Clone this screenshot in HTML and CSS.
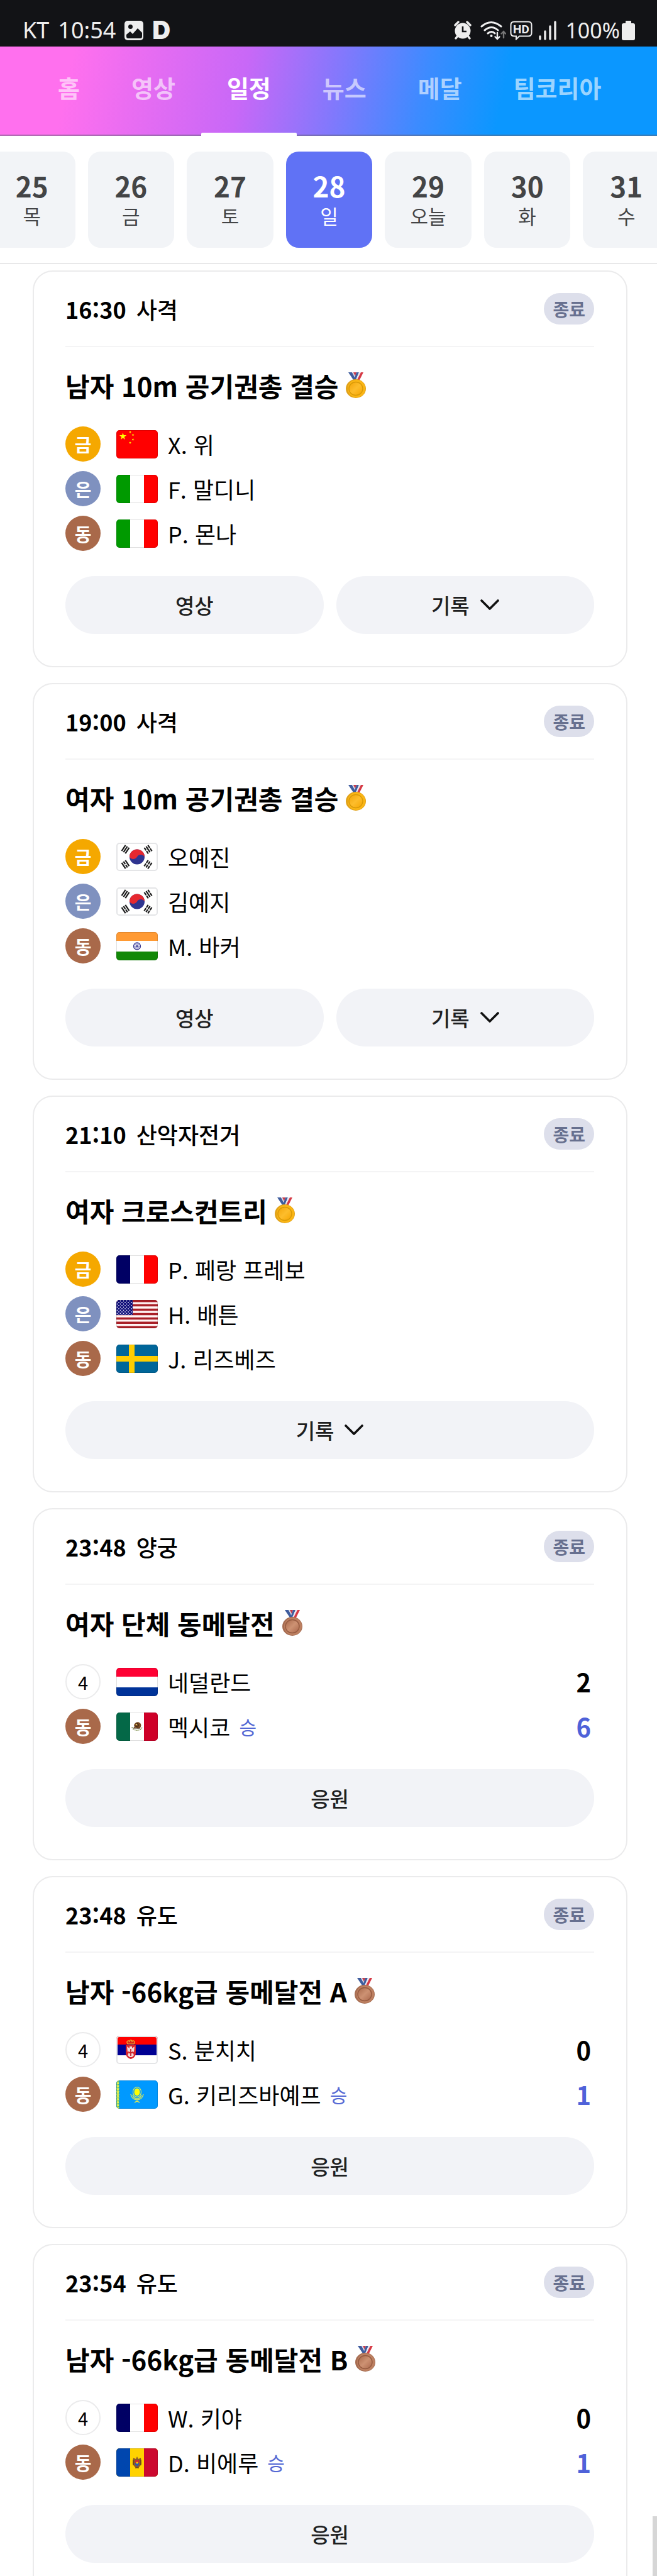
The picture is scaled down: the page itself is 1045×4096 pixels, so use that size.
FILE: index.html
```html
<!DOCTYPE html>
<html lang="ko">
<head>
<meta charset="utf-8">
<meta name="viewport" content="width=device-width, initial-scale=1">
<title>일정</title>
<link rel="stylesheet" href="styles.css">
</head>
<body>
<svg class="sprite" aria-hidden="true">
  <defs>
    <linearGradient id="gold" x1="0" y1="0" x2="1" y2="1">
      <stop offset="0" stop-color="#f3a407"/><stop offset=".5" stop-color="#fdbd2c"/><stop offset="1" stop-color="#f6a500"/>
    </linearGradient>
    <linearGradient id="bronze" x1="0" y1="0" x2="1" y2="1">
      <stop offset="0" stop-color="#a8684a"/><stop offset=".5" stop-color="#cd9273"/><stop offset="1" stop-color="#a9664a"/>
    </linearGradient>
    <path id="star" d="M0-6 1.4-1.9H5.7L2.2.7 3.5 4.9 0 2.3-3.5 4.9-2.2.7-5.7-1.9H-1.4Z"/>
    <pattern id="stars" width="5" height="5" patternUnits="userSpaceOnUse">
      <circle cx="1.5" cy="1.5" r=".9" fill="#dfe0f5"/><circle cx="4" cy="4" r=".9" fill="#dfe0f5"/>
    </pattern>
    <pattern id="ornament" width="5" height="5" patternUnits="userSpaceOnUse">
      <path d="M1 0 4 2.5 1 5M4 0 1 2.5 4 5" fill="none" stroke="#e8f04a" stroke-width="1.2"/>
    </pattern>
    <g id="ribbon">
      <path d="M4 0h6l7 12h-5z" fill="#3f5d9e"/><path d="M10 0h4l4 9-2 3z" fill="#d9dbe8"/>
      <path d="M12 0h5l-2 6z" fill="#c93b4a"/><path d="M17 0h4l-5 12h-3z" fill="#3f5d9e"/>
      <path d="M21 0h3l-5 12h-3z" fill="#e9e9f2"/><path d="M24 0h4l-6 12h-4z" fill="#d63a45"/>
    </g>
  </defs>
  <symbol id="medal-gold" viewBox="0 0 32 42">
    <use href="#ribbon"/>
    <ellipse cx="16" cy="26" rx="16" ry="15" fill="#e0a21b"/>
    <ellipse cx="17" cy="26" rx="14" ry="14" fill="#fbb615"/>
    <ellipse cx="16" cy="26" rx="11" ry="10.5" fill="url(#gold)" stroke="#d99a08" stroke-width="1.4"/>
  </symbol>
  <symbol id="medal-bronze" viewBox="0 0 32 42">
    <use href="#ribbon"/>
    <ellipse cx="16" cy="26" rx="16" ry="15" fill="#a66d52"/>
    <ellipse cx="17" cy="26" rx="14" ry="14" fill="#bd8061"/>
    <ellipse cx="16" cy="26" rx="11" ry="10.5" fill="url(#bronze)" stroke="#955a40" stroke-width="1.4"/>
  </symbol>
  <symbol id="chevron" viewBox="0 0 30 18">
    <path d="M2 2 15 15 28 2" fill="none" stroke="#111" stroke-width="3.6" stroke-linecap="round" stroke-linejoin="round"/>
  </symbol>
  <symbol id="flag-cn" viewBox="0 0 66 45">
    <path fill="#f00" d="M0 0h66v45H0z"/>
    <g fill="#ff0"><use href="#star" x="10.5" y="10"/>
      <use href="#star" transform="translate(22 3) scale(.35) rotate(20)"/><use href="#star" transform="translate(26.500 7.500) scale(.35)"/>
      <use href="#star" transform="translate(26.500 15) scale(.35) rotate(20)"/><use href="#star" transform="translate(22 20) scale(.35)"/></g>
  </symbol>
  <symbol id="flag-it" viewBox="0 0 66 45">
    <path fill="#fff" d="M0 0h66v45H0z"/><path fill="#009a00" d="M0 0h22v45H0z"/><path fill="#f00" d="M44 0h22v45H44z"/>
  </symbol>
  <symbol id="flag-fr" viewBox="0 0 66 45">
    <path fill="#fff" d="M0 0h66v45H0z"/><path fill="#000064" d="M0 0h22v45H0z"/><path fill="#f00" d="M44 0h22v45H44z"/>
  </symbol>
  <symbol id="flag-kr" viewBox="0 0 66 45">
    <path fill="#fff" d="M0 0h66v45H0z"/>
    <circle cx="33" cy="22.500" r="12" fill="#2f3590"/>
    <path d="M21 22.500a12 12 0 0 1 24 0c-2 -4-9 -5-12 0s-10 4-12 0" fill="#e6282f"/>
    <g stroke="#1c1c1c" stroke-width="2.200">
      <path d="M-3.500-5.500v11M0-5.500v11M3.500-5.500v11" transform="translate(14.500 10.500) rotate(34)"/>
      <path d="M-3.500-5.500v5M-3.500.8v5M0-5.500v11M3.500-5.500v5M3.500.8v5" transform="translate(50.500 10.500) rotate(-34)"/>
      <path d="M-3.500-5.500v11M0-5.500v5M0 .8v5M3.500-5.500v11" transform="translate(14.500 34.500) rotate(-34)"/>
      <path d="M-3.500-5.500v5M-3.500.8v5M0-5.500v5M0 .8v5M3.500-5.500v5M3.500.8v5" transform="translate(50.500 34.500) rotate(34)"/>
    </g>
  </symbol>
  <symbol id="flag-in" viewBox="0 0 66 45">
    <path fill="#fff" d="M0 0h66v45H0z"/><path fill="#ff9a33" d="M0 0h66v14H0z"/><path fill="#128807" d="M0 31h66v14H0z"/>
    <circle cx="33" cy="22.500" r="5.500" fill="#e3e3f4" stroke="#34348f" stroke-width="1.300"/><circle cx="33" cy="22.500" r="1.600" fill="#34348f"/>
    <path d="M33 17v11M27.500 22.500h11M29 18.500l8 8M37 18.500l-8 8" stroke="#5656a5" stroke-width=".7"/>
  </symbol>
  <symbol id="flag-us" viewBox="0 0 66 45">
    <path fill="#fff4f4" d="M0 0h66v45H0z"/>
    <path stroke="#a91f27" stroke-width="3.460" d="M0 1.700h66M0 8.600h66M0 15.500h66M0 22.500h66M0 29.400h66M0 36.300h66M0 43.300h66"/>
    <path fill="#0d0c77" d="M0 0h26v24H0z"/><path fill="url(#stars)" d="M0 0h26v24H0z"/>
  </symbol>
  <symbol id="flag-se" viewBox="0 0 66 45">
    <path fill="#006699" d="M0 0h66v45H0z"/><path fill="#ffcd00" d="M20 0h9v45h-9zM0 18h66v9H0z"/>
  </symbol>
  <symbol id="flag-nl" viewBox="0 0 66 45">
    <path fill="#fff" d="M0 0h66v45H0z"/><path fill="#ff0033" d="M0 0h66v14H0z"/><path fill="#003399" d="M0 31h66v14H0z"/>
  </symbol>
  <symbol id="flag-mx" viewBox="0 0 66 45">
    <path fill="#fff" d="M0 0h66v45H0z"/><path fill="#046847" d="M0 0h22v45H0z"/><path fill="#ce0028" d="M44 0h22v45H44z"/>
    <path d="M25 23c1 7 15 7 16 0" fill="none" stroke="#8a9a5b" stroke-width="1.500" stroke-dasharray="2 1"/>
    <path d="M28 20c2-5 7-6 10-3 2 2 2 6-1 8-3 1-5 0-6-1l-4 1 2-3z" fill="#7a4a22"/>
    <path d="M31 17c3 0 5 2 4 5M29 21l5 2M27 25h11" fill="none" stroke="#3a2512" stroke-width="1.200"/>
    <circle cx="32" cy="19" r="1.300" fill="#e0c060"/>
  </symbol>
  <symbol id="flag-rs" viewBox="0 0 66 45">
    <path fill="#fff" d="M0 0h66v45H0z"/><path fill="#f00" d="M0 0h66v14H0z"/><path fill="#000093" d="M0 14h66v17H0z"/>
    <path d="M18 13c-3-5 1-6 3-4 0-3 4-3 4 0 2-2 6-1 3 4z" fill="#d42a1c" stroke="#f0b830" stroke-width="1.200"/>
    <path d="M15 15h16v12c0 6-4 9-8 10-4-1-8-4-8-10z" fill="#d8252d"/>
    <path d="M17 17l4 3v-3h4v3l4-3-1 9-3-2 3 7-3 3h-4l-3-3 3-7-3 2z" fill="#f5dada"/>
    <path d="M23 21v11M20 27h6" stroke="#c9262e" stroke-width="1.800"/>
  </symbol>
  <symbol id="flag-kz" viewBox="0 0 66 45">
    <path fill="#0099ff" d="M0 0h66v45H0z"/><path fill="#2aa889" d="M0 0h5v45H0z"/><path fill="url(#ornament)" d="M0 0h5v45H0z"/>
    <ellipse cx="33" cy="18.500" rx="6.500" ry="7.800" fill="none" stroke="#c8e86a" stroke-width="1.200"/>
    <ellipse cx="33" cy="18.500" rx="4.500" ry="6" fill="#ff0"/>
    <path d="M23 22c2 12 18 12 20 0M26 23c2 8 12 8 14 0M29 35l4-2 4 2" fill="none" stroke="#d5e85c" stroke-width="1.400"/>
  </symbol>
  <symbol id="flag-md" viewBox="0 0 66 45">
    <path fill="#ffd200" d="M0 0h66v45H0z"/><path fill="#0046ae" d="M0 0h22v45H0z"/><path fill="#cc092f" d="M44 0h22v45H44z"/>
    <path d="M33 13l2 4 4-2 1 9-2 4-3 3h-4l-3-3-2-4 1-9 4 2z" fill="#8b5a2b"/>
    <path d="M27 18v9M39 18v9M30 31h6" stroke="#5c3a1b" stroke-width="1.200"/>
    <path d="M30 19h6v4h-6z" fill="#cc2a32"/><path d="M30 23h6v3l-3 3-3-3z" fill="#2e5aa8"/><circle cx="33" cy="23" r="1.500" fill="#ffd200"/>
  </symbol>
</svg>

<div class="app">
  <div class="status">
    <div class="status-left">
      <span>KT</span><span>10:54</span>
      <svg class="ico-photo" viewBox="0 0 30 31"><rect width="30" height="31" rx="5" fill="#eee"/><circle cx="9.500" cy="9.500" r="3.500" fill="#121316"/><path d="M3 22l6-5 4 4 8-9 7 7v6q0 3-3 3H6q-3 0-3-3z" fill="#121316"/></svg>
      <span class="d-mark">D</span>
    </div>
    <div class="status-right">
      <svg class="ico-alarm" viewBox="0 0 28 30"><path d="M2 7l5-5M26 7l-5-5M6 24l-3 4M22 24l3 4" stroke="#eee" stroke-width="3.400" stroke-linecap="round"/><circle cx="14" cy="16" r="12.500" fill="#eee"/><path d="M14 9v8h6" fill="none" stroke="#121316" stroke-width="2.600"/></svg>
      <svg class="ico-wifi" viewBox="0 0 41 31"><g fill="none" stroke="#eee" stroke-width="3" stroke-linecap="round"><path d="M2 9q15-13 31 0M7 15q11-9 21 0M12 20q6-5 11 0"/><path d="M27 19v10M23.500 25.500 27 29l3.500-3.500" stroke-width="2.400"/><path d="M37 27V17M33.500 20.500 37 17l3 3.500" stroke="#777" stroke-width="2.400"/></g><circle cx="17.500" cy="24" r="2" fill="#eee"/></svg>
      <svg class="ico-hd" viewBox="0 0 36 31"><path d="M7 1.500h22q5.500 0 5.500 5v13q0 5-5.500 5H15l-5 5v-5H7q-5.500 0-5.500-5v-13q0-5 5.500-5z" fill="none" stroke="#eee" stroke-width="2"/><text x="18" y="20" text-anchor="middle" font-family="Roboto, sans-serif" font-size="19" font-weight="700" fill="#eee">HD</text></svg>
      <svg class="ico-signal" viewBox="0 0 28 31"><path d="M2 25v4M10 17v12M18 9v20M26 2v27" stroke="#eee" stroke-width="3.400" stroke-linecap="round"/></svg>
      <span class="percent">100%</span>
      <svg class="ico-battery" viewBox="0 0 21 31"><path d="M6 1q0-1 1-1h7q1 0 1 1v3h3q3 0 3 3v21q0 3-3 3H3q-3 0-3-3V7q0-3 3-3h3z" fill="#eee"/></svg>
    </div>
  </div>

  <nav class="tabs">
    <a href="#">홈</a><a href="#">영상</a><a href="#" class="on" aria-current="page">일정</a><a href="#">뉴스</a><a href="#">메달</a><a href="#">팀코리아</a>
  </nav>

  <div class="dates">
    <div class="dates-track">
      <button type="button"><b>25</b><span>목</span></button>
      <button type="button"><b>26</b><span>금</span></button>
      <button type="button"><b>27</b><span>토</span></button>
      <button type="button" class="on"><b>28</b><span>일</span></button>
      <button type="button"><b>29</b><span>오늘</span></button>
      <button type="button"><b>30</b><span>화</span></button>
      <button type="button"><b>31</b><span>수</span></button>
    </div>
  </div>

  <main class="list">
    <article class="card">
      <header><time>16:30</time><span class="sport">사격</span><span class="badge">종료</span></header>
      <h2>남자 10m 공기권총 결승<svg class="medal"><use href="#medal-gold"/></svg></h2>
      <ul>
        <li><i class="rank gold">금</i><svg class="flag"><use href="#flag-cn"/></svg><span>X. 위</span></li>
        <li><i class="rank silver">은</i><svg class="flag"><use href="#flag-it"/></svg><span>F. 말디니</span></li>
        <li><i class="rank bronze">동</i><svg class="flag"><use href="#flag-it"/></svg><span>P. 몬나</span></li>
      </ul>
      <div class="actions"><button type="button">영상</button><button type="button">기록<svg class="chev"><use href="#chevron"/></svg></button></div>
    </article>

    <article class="card">
      <header><time>19:00</time><span class="sport">사격</span><span class="badge">종료</span></header>
      <h2>여자 10m 공기권총 결승<svg class="medal"><use href="#medal-gold"/></svg></h2>
      <ul>
        <li><i class="rank gold">금</i><svg class="flag light"><use href="#flag-kr"/></svg><span>오예진</span></li>
        <li><i class="rank silver">은</i><svg class="flag light"><use href="#flag-kr"/></svg><span>김예지</span></li>
        <li><i class="rank bronze">동</i><svg class="flag"><use href="#flag-in"/></svg><span>M. 바커</span></li>
      </ul>
      <div class="actions"><button type="button">영상</button><button type="button">기록<svg class="chev"><use href="#chevron"/></svg></button></div>
    </article>

    <article class="card">
      <header><time>21:10</time><span class="sport">산악자전거</span><span class="badge">종료</span></header>
      <h2>여자 크로스컨트리<svg class="medal"><use href="#medal-gold"/></svg></h2>
      <ul>
        <li><i class="rank gold">금</i><svg class="flag"><use href="#flag-fr"/></svg><span>P. 페랑 프레보</span></li>
        <li><i class="rank silver">은</i><svg class="flag"><use href="#flag-us"/></svg><span>H. 배튼</span></li>
        <li><i class="rank bronze">동</i><svg class="flag"><use href="#flag-se"/></svg><span>J. 리즈베즈</span></li>
      </ul>
      <div class="actions"><button type="button">기록<svg class="chev"><use href="#chevron"/></svg></button></div>
    </article>

    <article class="card">
      <header><time>23:48</time><span class="sport">양궁</span><span class="badge">종료</span></header>
      <h2>여자 단체 동메달전<svg class="medal"><use href="#medal-bronze"/></svg></h2>
      <ul>
        <li><i class="rank">4</i><svg class="flag"><use href="#flag-nl"/></svg><span>네덜란드</span><b class="score">2</b></li>
        <li><i class="rank bronze">동</i><svg class="flag"><use href="#flag-mx"/></svg><span>멕시코</span><em>승</em><b class="score win">6</b></li>
      </ul>
      <div class="actions"><button type="button">응원</button></div>
    </article>

    <article class="card">
      <header><time>23:48</time><span class="sport">유도</span><span class="badge">종료</span></header>
      <h2>남자 -66kg급 동메달전 A<svg class="medal"><use href="#medal-bronze"/></svg></h2>
      <ul>
        <li><i class="rank">4</i><svg class="flag light"><use href="#flag-rs"/></svg><span>S. 분치치</span><b class="score">0</b></li>
        <li><i class="rank bronze">동</i><svg class="flag"><use href="#flag-kz"/></svg><span>G. 키리즈바예프</span><em>승</em><b class="score win">1</b></li>
      </ul>
      <div class="actions"><button type="button">응원</button></div>
    </article>

    <article class="card">
      <header><time>23:54</time><span class="sport">유도</span><span class="badge">종료</span></header>
      <h2>남자 -66kg급 동메달전 B<svg class="medal"><use href="#medal-bronze"/></svg></h2>
      <ul>
        <li><i class="rank">4</i><svg class="flag"><use href="#flag-fr"/></svg><span>W. 키야</span><b class="score">0</b></li>
        <li><i class="rank bronze">동</i><svg class="flag"><use href="#flag-md"/></svg><span>D. 비에루</span><em>승</em><b class="score win">1</b></li>
      </ul>
      <div class="actions"><button type="button">응원</button></div>
    </article>
  </main>
  <div class="thumb"></div>
</div>
</body>
</html>
```
FILE: styles.css
```css
* { box-sizing: border-box; }

body {
  margin: 0;
  background: #fff;
  color: #000;
  font-family: "Noto Sans CJK KR", "Noto Sans", sans-serif;
}

svg { display: block; flex: none; }
button { border: 0; padding: 0; font: inherit; color: inherit; cursor: pointer; }

.sprite { position: absolute; width: 0; height: 0; }

/* App shell: fixed bars on top, the list fills the rest */
.app {
  position: relative;
  display: flex;
  flex-direction: column;
  height: 100vh;
  overflow: hidden;
}

/* Device status bar */
.status {
  display: flex;
  justify-content: space-between;
  flex: none;
  height: 74px;
  padding: 22px 35px 0 36px;
  background: #121316;
  color: #eee;
  font-family: "Noto Sans", sans-serif;
  font-size: 36px;
  line-height: 52px;
}
.status-left, .status-right { display: flex; align-items: center; }
.status-left { gap: 14px; }
.ico-photo { width: 30px; height: 31px; }
.d-mark { font-family: Inter, sans-serif; font-weight: 900; font-size: 40px; }
.ico-alarm { width: 28px; height: 30px; margin-right: 14px; }
.ico-wifi { width: 41px; height: 31px; margin-right: 6px; }
.ico-hd { width: 36px; height: 31px; margin-right: 10px; }
.ico-signal { width: 28px; height: 31px; margin-right: 14px; }
.percent { font-size: 34px; margin-right: 3px; }
.ico-battery { width: 21px; height: 31px; }

/* Section tabs */
.tabs {
  display: flex;
  flex: none;
  height: 142px;
  padding-left: 51px;
  border-bottom: 2px solid rgba(100, 100, 120, 0.5);
  background: linear-gradient(102deg, #ff70ee 11%, #c868f7 37%, #8378fc 51%, #3d8bff 64%, #0b97ff 76%) border-box;
}
.tabs a {
  position: relative;
  padding: 0 41px;
  color: rgba(255, 255, 255, 0.6);
  font-size: 38px;
  font-weight: 700;
  line-height: 130px;
  text-decoration: none;
  white-space: nowrap;
}
.tabs .on { color: #fff; }
.tabs .on::after {
  content: "";
  position: absolute;
  left: 0;
  right: 0;
  bottom: -2px;
  height: 5px;
  border-radius: 2px 2px 0 0;
  background: #fff;
}

/* Date strip */
.dates {
  flex: none;
  overflow: hidden;
  padding: 25px 0 24px;
  border-bottom: 2px solid #e8e8e9;
}
.dates-track {
  display: grid;
  grid-template-columns: repeat(7, 1fr);
  gap: 20px;
  margin: 0 -20px 0 -18px;
}
.dates button {
  display: flex;
  flex-direction: column;
  align-items: center;
  justify-content: center;
  height: 153px;
  padding-bottom: 4px;
  border-radius: 20px;
  background: #f2f4f7;
  color: #434446;
}
.dates b { font-size: 44px; font-weight: 700; line-height: 54px; }
.dates span { font-size: 31px; line-height: 42px; }
.dates .on { background: #6072f5; color: #fff; }

/* Event cards */
.list {
  flex: 1;
  min-height: 0;
  overflow: hidden;
  display: flex;
  flex-direction: column;
  gap: 25px;
  padding: 10px 47px 0 52px;
}
.card {
  flex: none;
  padding: 0 51px 51px 50px;
  border: 2px solid #ebebec;
  border-radius: 32px;
}
.card header {
  display: flex;
  align-items: center;
  height: 120px;
  border-bottom: 2px solid #f4f4f5;
  font-size: 36px;
  font-weight: 500;
}
.card time { font-weight: 700; }
.sport { margin-left: 16px; }
.badge {
  margin-left: auto;
  padding: 0 14px;
  border-radius: 25px;
  background: #dddfeb;
  color: #67708f;
  font-size: 28px;
  font-weight: 700;
  line-height: 50px;
}
.card h2 {
  display: flex;
  align-items: center;
  margin: 30px 0 34px;
  font-size: 42px;
  font-weight: 700;
  line-height: 62px;
}
.medal { width: 32px; height: 42px; margin-left: 12px; }

.card ul {
  display: grid;
  gap: 15px;
  margin: 0;
  padding: 0;
  list-style: none;
}
.card li { display: flex; align-items: center; height: 56px; font-size: 36px; line-height: 50px; }
.rank {
  display: flex;
  align-items: center;
  justify-content: center;
  width: 56px;
  height: 56px;
  margin-right: 25px;
  border: 2px solid #ebebec;
  border-radius: 50%;
  font-size: 29px;
  font-style: normal;
}
.gold, .silver, .bronze { border: 0; color: #fff; font-weight: 700; }
.gold { background: #f5a800; }
.silver { background: #7f91bf; }
.bronze { background: #a9694a; }
.flag {
  width: 66px;
  height: 45px;
  margin-right: 16px;
  border-radius: 5px;
  outline: 1px solid rgba(0, 0, 0, 0.12);
  outline-offset: -1px;
}
.light { outline: 2px solid #e4e5e7; outline-offset: -2px; }
.card em { margin-left: 14px; color: #5468d4; font-size: 30px; font-style: normal; }
.score { margin-left: auto; padding-right: 5px; font-size: 40px; font-weight: 700; }
.win { color: #4f62d9; }

.actions { display: flex; gap: 20px; margin-top: 40px; }
.actions button {
  display: flex;
  flex: 1;
  align-items: center;
  justify-content: center;
  gap: 17px;
  height: 92px;
  border-radius: 46px;
  background: #f2f3f7;
  color: #1e1f22;
  font-size: 33px;
  font-weight: 500;
}
.chev { width: 30px; height: 18px; }

/* Scroll indicator over the list */
.thumb {
  position: absolute;
  right: 0;
  bottom: 0;
  width: 7px;
  height: 95px;
  background: #d6d6d6;
}
```
